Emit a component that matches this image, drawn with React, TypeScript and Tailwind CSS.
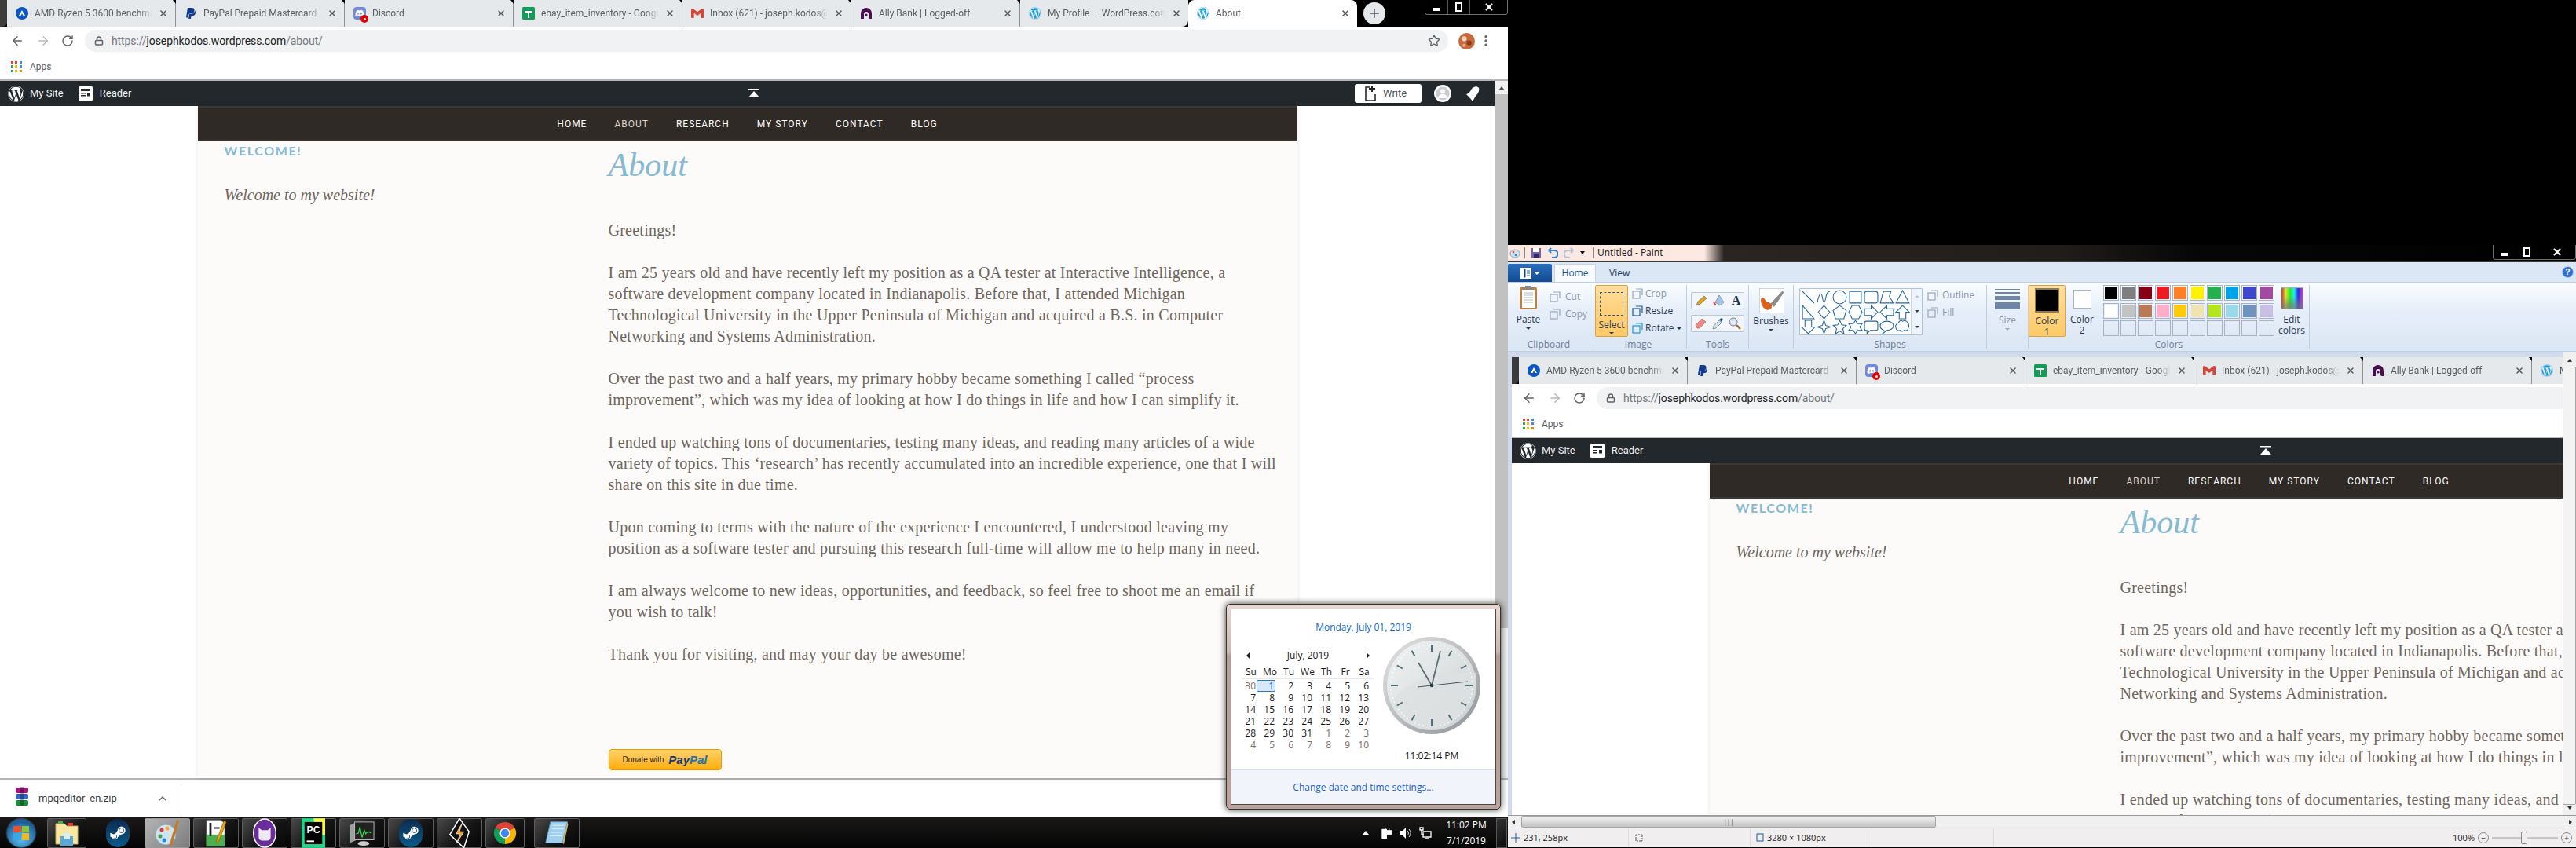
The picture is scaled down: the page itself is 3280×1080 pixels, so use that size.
import React from "react";
import { ArrowLeft, ArrowRight, ChevronUp, Lock, MoreVertical, Plus, RotateCw, Star, X } from "lucide-react";
import { FaDiscord, FaPaypal, FaSteamSymbol, FaWordpress } from "react-icons/fa";
import { SiGmail } from "react-icons/si";

const WpIcon = () => <FaWordpress className="h-4 w-4 shrink-0 text-[#1f9fd8]" />;

const tabs = [
  {
    title: "AMD Ryzen 5 3600 benchmark results",
    icon: (
      <svg viewBox="0 0 16 16" className="h-4 w-4 shrink-0">
        <circle cx="8" cy="8" r="8" fill="#0b55c4" />
        <path d="M8 4l4 7H4z" fill="#fff" />
        <path d="M8 8l1.5 3h-3z" fill="#0b55c4" />
      </svg>
    ),
  },
  { title: "PayPal Prepaid Mastercard", icon: <FaPaypal className="h-4 w-4 shrink-0 text-[#123a8c]" /> },
  {
    title: "Discord",
    icon: (
      <span className="relative flex h-4 w-4 shrink-0 items-center justify-center rounded-sm bg-[#7289da]">
        <FaDiscord className="h-3 w-3 text-white" />
        <span className="absolute -bottom-1 right-[-3px] flex h-[10px] w-[10px] items-center justify-center rounded-full bg-[#e00000]">
          <span className="h-[3px] w-[3px] rounded-full bg-white" />
        </span>
      </span>
    ),
  },
  {
    title: "ebay_item_inventory - Google Sheets",
    icon: (
      <svg viewBox="0 0 16 16" className="h-4 w-4 shrink-0">
        <rect width="16" height="16" rx="1.5" fill="#0f9d58" />
        <path d="M3 5h10v2H9v7H7V7H3z" fill="#fff" />
      </svg>
    ),
  },
  { title: "Inbox (621) - joseph.kodos@gmail.com", icon: <SiGmail className="h-4 w-4 shrink-0 text-[#d44638]" /> },
  {
    title: "Ally Bank | Logged-off",
    icon: (
      <svg viewBox="0 0 16 16" className="h-4 w-4 shrink-0">
        <path d="M8 1a7 7 0 0 0-7 7v7h4V9a3 3 0 0 1 6 0v4a2 2 0 0 0 2 2h2V8a7 7 0 0 0-7-7z" fill="#4a0d4f" />
        <circle cx="8" cy="10" r="1.6" fill="#4a0d4f" />
      </svg>
    ),
  },
  { title: "My Profile — WordPress.com", icon: <WpIcon /> },
  { title: "About", icon: <WpIcon />, active: true },
];

const navItems = ["Home", "About", "Research", "My Story", "Contact", "Blog"];

const paragraphs = [
  ["Greetings!"],
  [
    "I am 25 years old and have recently left my position as a QA tester at Interactive Intelligence, a",
    "software development company located in Indianapolis. Before that, I attended Michigan",
    "Technological University in the Upper Peninsula of Michigan and acquired a B.S. in Computer",
    "Networking and Systems Administration.",
  ],
  [
    "Over the past two and a half years, my primary hobby became something I called “process",
    "improvement”, which was my idea of looking at how I do things in life and how I can simplify it.",
  ],
  [
    "I ended up watching tons of documentaries, testing many ideas, and reading many articles of a wide",
    "variety of topics. This ‘research’ has recently accumulated into an incredible experience, one that I will",
    "share on this site in due time.",
  ],
  [
    "Upon coming to terms with the nature of the experience I encountered, I understood leaving my",
    "position as a software tester and pursuing this research full-time will allow me to help many in need.",
  ],
  [
    "I am always welcome to new ideas, opportunities, and feedback, so feel free to shoot me an email if",
    "you wish to talk!",
  ],
  ["Thank you for visiting, and may your day be awesome!"],
];

const AppsGrid = () => {
  const colors = ["#ea4335", "#ea4335", "#4285f4", "#34a853", "#fbbc05", "#4285f4", "#34a853", "#fbbc05", "#ea8600"];
  return (
    <div className="grid h-[14px] w-[14px] grid-cols-3 gap-[2px]">
      {colors.map((c, i) => (
        <svg key={i} viewBox="0 0 3 3" className="h-[3px] w-[3px]">
          <rect width="3" height="3" fill={c} />
        </svg>
      ))}
    </div>
  );
};

const WindowControls = () => (
  <div className="flex h-[19px] w-[106px] items-center rounded-b-[4px] border border-t-0 border-[#6f6f6f] text-white">
    <div className="flex h-full w-[29px] items-center justify-center border-r border-[#555]">
      <span className="mt-[6px] h-[4px] w-[10px] bg-white" />
    </div>
    <div className="flex h-full w-[28px] items-center justify-center border-r border-[#555]">
      <span className="flex h-[12px] w-[9px] items-center justify-center border-2 border-white">
        <span className="h-[4px] w-[2px] bg-black" />
      </span>
    </div>
    <div className="flex flex-1 items-center justify-center">
      <X className="h-[14px] w-[14px]" strokeWidth={3.5} />
    </div>
  </div>
);

const TabStrip = () => (
  <div className="flex h-[34px] bg-black">
    <div className="h-full w-[9px] rounded-br-[6px] bg-[#3c3c3c]" />
    {tabs.map((t, i) => (
      <div
        key={t.title}
        className={
          t.active
            ? "relative flex h-full w-[215px] items-center gap-[8px] rounded-t-[8px] bg-white pl-[11px] pr-[9px]"
            : i === 6
            ? "relative flex h-full w-[214px] items-center gap-[8px] rounded-br-[8px] bg-[#e6e9ec] pl-[11px] pr-[9px]"
            : "relative flex h-full w-[215px] items-center gap-[8px] border-r border-[#8d9297] bg-[#e6e9ec] pl-[11px] pr-[9px]"
        }
      >
        {t.icon}
        <span className="flex-1 overflow-hidden whitespace-nowrap font-['Roboto',sans-serif] text-[12px] text-[#5c6065] [mask-image:linear-gradient(to_right,black_88%,transparent)]">
          {t.title}
        </span>
        <X className="h-[12px] w-[12px] shrink-0 text-[#55595e]" strokeWidth={3} />
        {i < 6 && (
          <span className="absolute -right-[5px] top-0 h-0 w-0 border-x-[4px] border-t-[5px] border-x-transparent border-t-black" />
        )}
      </div>
    ))}
    <div className="ml-[8px] mt-[3px] flex h-[28px] w-[28px] items-center justify-center rounded-full bg-[#e6e9ec]">
      <Plus className="h-[18px] w-[18px] text-[#55595e]" strokeWidth={2} />
    </div>
    <div className="ml-auto">
      <WindowControls />
    </div>
  </div>
);

const Toolbar = () => (
  <div className="flex h-[35px] items-start bg-white pt-[4px]">
    <div className="flex h-[28px] w-[108px] items-center pl-[13px] text-[#5f6368]">
      <ArrowLeft className="h-[18px] w-[18px]" strokeWidth={2} />
      <ArrowRight className="ml-[15px] h-[18px] w-[18px] text-[#b5b8bb]" strokeWidth={2} />
      <RotateCw className="ml-[14px] h-[16px] w-[16px]" strokeWidth={2.2} />
    </div>
    <div className="flex h-[28px] w-[1736px] items-center rounded-full bg-[#f0f2f4] pl-[12px] pr-[10px]">
      <Lock className="h-[12px] w-[12px] text-[#5f6368]" strokeWidth={3} />
      <span className="ml-[10px] font-['Roboto',sans-serif] text-[14px] tracking-[-0.1px] text-[#74787c]">
        https://<span className="text-[#222]">josephkodos.wordpress.com</span>/about/
      </span>
      <Star className="ml-auto h-[16px] w-[16px] text-[#5f6368]" strokeWidth={2} />
    </div>
    <svg viewBox="0 0 20 20" className="ml-[13px] mt-[4px] h-[21px] w-[21px]">
      <circle cx="10" cy="10" r="10" fill="#c8693a" />
      <circle cx="7" cy="7" r="3" fill="#f3d9c4" />
      <circle cx="13" cy="12" r="3" fill="#8c3a1c" />
      <circle cx="7" cy="15" r="2" fill="#eab28f" />
    </svg>
    <MoreVertical className="ml-[5px] mt-[5px] h-[18px] w-[18px] text-[#5f6368]" strokeWidth={2.5} />
  </div>
);

const BookmarksBar = () => (
  <div className="flex h-[34px] items-center gap-[10px] border-b-2 border-[#b5b5b5] bg-white pl-[14px]">
    <AppsGrid />
    <span className="font-['Roboto',sans-serif] text-[12px] text-[#5c6065]">Apps</span>
  </div>
);

const WpBar = () => (
  <div className="flex h-[32px] items-center bg-[#23282d] pl-[10px] pr-[18px] font-['Roboto',sans-serif] text-[13px] text-[#eef0f2]">
    <FaWordpress className="h-[21px] w-[21px] text-white" />
    <span className="ml-[7px]">My Site</span>
    <svg viewBox="0 0 18 18" className="ml-[19px] h-[18px] w-[18px]">
      <rect width="18" height="18" rx="1.5" fill="#fff" />
      <path d="M3 3h12v3H3zM3 8h6v1.5H3zM3 11h6v1.5H3zM11 8h4v4.5h-4z" fill="#23282d" />
    </svg>
    <span className="ml-[9px]">Reader</span>
    <svg viewBox="0 0 16 12" className="ml-[785px] h-[12px] w-[16px]">
      <path d="M1 0h14v1.5H1zM8 3l7 8H1z" fill="#fff" />
    </svg>
    <div className="ml-auto flex h-[24px] w-[85px] items-center gap-[7px] rounded-[3px] bg-white pl-[13px] text-[#50575e]">
      <svg viewBox="0 0 16 20" className="h-[20px] w-[16px]">
        <path d="M6 2H1v17h12v-8" fill="none" stroke="#23282d" strokeWidth="1.6" />
        <path d="M9 0v8M5 4h8" stroke="#23282d" strokeWidth="2" />
      </svg>
      <span>Write</span>
    </div>
    <svg viewBox="0 0 22 22" className="ml-[16px] h-[24px] w-[22px]">
      <circle cx="11" cy="11" r="11" fill="#fff" />
      <circle cx="11" cy="11" r="8.5" fill="#c9ccd0" />
      <circle cx="11" cy="8.5" r="3" fill="#fff" />
      <path d="M5 17a6 5 0 0 1 12 0z" fill="#fff" />
    </svg>
    <svg viewBox="0 0 20 22" className="ml-[17px] h-[22px] w-[20px]">
      <path d="M2 12c4-1 5-4 7-7 2-3 7-4 9-1 1 4-1 7-3 9-2 2-3 5-5 8-2-3-5-6-8-9z" fill="#fff" />
    </svg>
  </div>
);

const WebPage = () => (
  <div className="relative mx-auto flex h-full min-h-0 w-[1400px] flex-col bg-[#fcfbf9] shadow-[0_0_6px_rgba(0,0,0,0.1)]">
    <nav className="flex h-[45px] items-center justify-center gap-[35px] border-y-2 border-[#3d3833] bg-[#2f2a26] font-['Roboto',sans-serif] text-[12px] font-normal uppercase tracking-[1px] text-white">
      {navItems.map((n) => (
        <span key={n} className={n === "About" ? "text-[#dcd4c6]" : ""}>
          {n}
        </span>
      ))}
    </nav>
    <div className="flex">
      <aside className="w-[523px] shrink-0 pl-[34px]">
        <h3 className="mt-[2px] font-['Lato',sans-serif] text-[16px] font-bold uppercase leading-[20px] tracking-[1.6px] text-[#86bad4]">
          Welcome!
        </h3>
        <p className="mt-[33px] font-['Liberation_Serif',serif] text-[20px] italic leading-[27px] text-[#6f665e]">
          Welcome to my website!
        </p>
      </aside>
      <main className="font-['Liberation_Serif',serif] text-[20px] leading-[27px] text-[#6f665e]">
        <h1 className="mt-[6px] text-[42px] italic leading-[48px] text-[#86bad4]">About</h1>
        <div className="mt-[46px] flex flex-col gap-[27px]">
          {paragraphs.map((lines) => (
            <p key={lines[0]} className="whitespace-nowrap tracking-[0.25px]">
              {lines.map((line) => (
                <span key={line} className="block">
                  {line}
                </span>
              ))}
            </p>
          ))}
        </div>
        <div className="mt-[107px] flex h-[27px] w-[144px] items-center justify-center gap-[6px] rounded-[4px] border border-[#e89a00] bg-[linear-gradient(#ffd36a,#ffac0d)] font-['Liberation_Sans',sans-serif]">
          <span className="text-[10px] text-[#222]">Donate with</span>
          <span className="text-[15px] font-bold italic leading-none text-[#123a7c]">
            Pay<span className="text-[#1a73c4]">Pal</span>
          </span>
        </div>
      </main>
    </div>
  </div>
);

const Browser = () => (
  <div className="flex h-[1040px] w-[1920px] flex-col">
    <TabStrip />
    <Toolbar />
    <BookmarksBar />
    <div className="flex h-[888px] bg-white">
      <div className="flex w-[1903px] flex-col">
        <WpBar />
        <div className="min-h-0 flex-1">
          <WebPage />
        </div>
      </div>
      <div className="flex w-[17px] flex-col items-center bg-[#f1f1f1]">
        <span className="mt-[7px] h-0 w-0 border-x-[4px] border-b-[5px] border-x-transparent border-b-[#505050]" />
        <div className="mt-[5px] h-[680px] w-full bg-[#c1c1c1]" />
      </div>
    </div>
    <div className="flex h-[49px] items-center border-t-2 border-[#b5b5b5] bg-white">
      <svg viewBox="0 0 16 24" className="ml-[20px] mb-[6px] h-[24px] w-[16px]">
        <rect x="0" y="1" width="16" height="7" rx="2" fill="#a3127f" />
        <rect x="0" y="9" width="16" height="7" rx="2" fill="#3a63c8" />
        <rect x="0" y="17" width="16" height="7" rx="2" fill="#1b8a3a" />
        <path d="M6 0h4v24H6z" fill="#111" opacity=".35" />
      </svg>
      <span className="ml-[13px] font-['Roboto',sans-serif] text-[13px] text-[#3c4043]">mpqeditor_en.zip</span>
      <ChevronUp className="ml-[50px] h-[16px] w-[16px] text-[#5f6368]" strokeWidth={2} />
      <div className="ml-[15px] h-[36px] w-px bg-[#d8d8d8]" />
    </div>
  </div>
);

type TaskItem = { icon: React.ReactNode; w: number; state: "off" | "on" | "active"; gap: number };

const Folder = () => (
  <svg viewBox="0 0 32 36" className="h-[36px] w-[32px]">
    <path d="M2 6h11l3 3h14v23H2z" fill="#f7e7a0" stroke="#c9b060" />
    <path d="M8 22h16v12H8z" fill="#5aa9dc" />
    <path d="M12 18h8v8h-8z" fill="#d9eefb" />
    <rect x="5" y="3" width="6" height="3" fill="#4caf50" />
    <rect x="18" y="5" width="6" height="4" fill="#e53935" />
  </svg>
);

const Palette = () => (
  <svg viewBox="0 0 32 36" className="h-[36px] w-[32px]">
    <ellipse cx="14" cy="20" rx="13" ry="13" fill="#cfe3f0" stroke="#8fa9bb" />
    <circle cx="9" cy="14" r="2.5" fill="#e53935" />
    <circle cx="16" cy="12" r="2.5" fill="#f9a825" />
    <circle cx="7" cy="22" r="2.5" fill="#43a047" />
    <circle cx="12" cy="27" r="2.5" fill="#1e88e5" />
    <path d="M28 1l3 2-9 31-4 1z" fill="#c47a2c" />
  </svg>
);

const NotepadPP = () => (
  <svg viewBox="0 0 32 40" className="h-[38px] w-[30px]">
    <path d="M3 2h20l5 5v31H3z" fill="#fff" stroke="#555" />
    <path d="M3 22h25v16H3z" fill="#4caf50" />
    <path d="M7 6h3v18H7zM13 12h8v2h-8z" fill="#222" />
    <path d="M27 3l3 2-10 26-3 3 0-5z" fill="#e8a317" stroke="#7a4c00" strokeWidth=".6" />
  </svg>
);

const Kraken = () => (
  <svg viewBox="0 0 32 40" className="h-[38px] w-[32px]">
    <ellipse cx="16" cy="20" rx="15" ry="19" fill="#6b2c9c" stroke="#fff" strokeWidth="1.6" />
    <path d="M8 13l4 3h8l4-3v13a5 5 0 0 1-5 4h-6a5 5 0 0 1-5-4z" fill="#efe9f5" />
  </svg>
);

const PyCharm = () => (
  <svg viewBox="0 0 32 40" className="h-[38px] w-[30px]">
    <rect width="32" height="40" fill="#21d789" />
    <path d="M16 0h16v22H22z" fill="#fcf84a" />
    <rect x="4" y="5" width="24" height="30" fill="#000" />
    <path d="M7 30h10v2H7z" fill="#fff" />
    <text x="7" y="20" fill="#fff" fontSize="13" fontFamily="Liberation Sans" fontWeight="700">
      PC
    </text>
  </svg>
);

const Monitor = () => (
  <svg viewBox="0 0 34 38" className="h-[36px] w-[32px]">
    <path d="M1 8l7-3v24l-7 3z" fill="#9aa3a0" />
    <rect x="7" y="4" width="26" height="24" fill="#222" stroke="#bbb" />
    <path d="M9 20l3-1 2-8 3 14 3-10 2 5 3-3 5 2" fill="none" stroke="#35d04a" strokeWidth="1.4" />
    <ellipse cx="19" cy="33" rx="8" ry="3" fill="#c8cdd0" />
  </svg>
);

const Winamp = () => (
  <svg viewBox="0 0 32 40" className="h-[38px] w-[30px]">
    <path d="M16 0l13 18-7 22L3 22z" fill="#111" stroke="#fff" strokeWidth="1.6" />
    <path d="M20 6l-9 15h6l-5 13 10-16h-6z" fill="#f39a1f" stroke="#fff" strokeWidth=".7" />
  </svg>
);

const Notepad = () => (
  <svg viewBox="0 0 34 38" className="h-[34px] w-[32px]">
    <path d="M8 3h24l-7 30H1z" fill="#9fd0ee" stroke="#5e93b4" />
    <path d="M11 8h17M10 13h17M8 18h17M7 23h17" stroke="#e6f4fc" />
    <path d="M25 33l7-30 1 4-6 28z" fill="#d2b36a" />
  </svg>
);

const Steam = () => (
  <span className="flex h-[36px] w-[30px] items-center justify-center rounded-full bg-[linear-gradient(#0c2a4e,#0b5c8c)]">
    <FaSteamSymbol className="h-[22px] w-[22px] text-white" />
  </span>
);

const Chrome = () => (
  <svg viewBox="0 0 32 32" className="h-[32px] w-[30px]">
    <path d="M16 16L3 8.500A15 15 0 0 1 29 8.500z" fill="#db4437" />
    <path d="M16 16L29 8.500A15 15 0 0 1 16 31z" fill="#f4b400" />
    <path d="M16 16L16 31A15 15 0 0 1 3 8.500z" fill="#0f9d58" />
    <circle cx="16" cy="16" r="7" fill="#fff" />
    <circle cx="16" cy="16" r="5.500" fill="#4285f4" />
  </svg>
);

const taskItems: TaskItem[] = [
  { icon: <Folder />, w: 50, state: "on", gap: 0 },
  { icon: <Steam />, w: 50, state: "off", gap: 15 },
  { icon: <Palette />, w: 58, state: "active", gap: 9 },
  { icon: <NotepadPP />, w: 58, state: "on", gap: 4 },
  { icon: <Kraken />, w: 58, state: "on", gap: 4 },
  { icon: <PyCharm />, w: 58, state: "on", gap: 4 },
  { icon: <Monitor />, w: 58, state: "on", gap: 4 },
  { icon: <Steam />, w: 58, state: "on", gap: 4 },
  { icon: <Winamp />, w: 58, state: "on", gap: 4 },
  { icon: <Chrome />, w: 50, state: "on", gap: 4 },
  { icon: <Notepad />, w: 58, state: "on", gap: 12 },
];

const Taskbar = () => (
  <div className="flex h-[40px] w-[1920px] items-center border-t border-[#3c3c3c] bg-[linear-gradient(#1b1918,#040404)] font-['Open_Sans',sans-serif] text-white">
    <div className="ml-[9px] flex h-[36px] w-[36px] items-center justify-center rounded-full bg-[radial-gradient(circle_at_50%_70%,#5fc4f0,#1c5d9c_70%)] shadow-[0_0_2px_#9fd3f5]">
      <div className="grid h-[18px] w-[20px] grid-cols-2 gap-px">
        <span className="bg-[#e8512f]" />
        <span className="bg-[#8bc53f]" />
        <span className="bg-[#3ba7e0]" />
        <span className="bg-[#f5b91b]" />
      </div>
    </div>
    <div className="ml-[15px] flex h-full items-center">
      {taskItems.map((t, i) => (
        <div
          key={i}
          style={{ width: t.w, marginLeft: t.gap }}
          className={
            t.state === "active"
              ? "flex h-[38px] items-center justify-center rounded-[2px] border border-[#9a9a9a] bg-[linear-gradient(135deg,#b4b4b4,#7c7c7c)]"
              : t.state === "on"
              ? "flex h-[38px] items-center justify-center rounded-[2px] border border-[#5c5c5c] bg-[linear-gradient(135deg,#4a4a4a,#161616_55%,#050505)]"
              : "flex h-[38px] items-center justify-center"
          }
        >
          {t.icon}
        </div>
      ))}
    </div>
    <div className="ml-auto flex items-center">
      <span className="h-0 w-0 border-x-[4px] border-b-[5px] border-x-transparent border-b-white" />
      <svg viewBox="0 0 14 18" className="ml-[15px] h-[17px] w-[14px]">
        <path d="M1 4h7v13H1z" fill="#fff" />
        <path d="M6 2v4M11 2v4M4 6h10v5H4z" stroke="#fff" fill="#fff" />
      </svg>
      <svg viewBox="0 0 16 16" className="ml-[10px] h-[16px] w-[16px]">
        <path d="M1 5h3l4-4v14l-4-4H1z" fill="#fff" />
        <path d="M10 5a4 4 0 0 1 0 6M12 3a7 7 0 0 1 0 10" fill="none" stroke="#ddd" />
      </svg>
      <svg viewBox="0 0 16 16" className="ml-[9px] h-[16px] w-[16px]">
        <path d="M5 6h10v7H5zM8 15h4M1 1h4v3H1zM3 4v6h3" fill="none" stroke="#fff" strokeWidth="1.3" />
      </svg>
      <div className="ml-[16px] w-[56px] text-center text-[12px] leading-[20px]">
        <div>11:02 PM</div>
        <div>7/1/2019</div>
      </div>
      <div className="ml-[10px] h-[38px] w-[14px] border border-[#555] bg-[linear-gradient(135deg,#333,#0a0a0a)]" />
      <span className="w-px" />
    </div>
  </div>
);

const ribbonLabel = "text-center font-['Open_Sans',sans-serif] text-[12px] leading-[14px] text-[#2b3d55]";
const groupTitle = "absolute bottom-[-2px] left-0 right-0 text-center text-[12px] leading-[14px] text-[#6f8098]";

const RibbonGroup = ({ title, width, children }: { title: string; width: number; children: React.ReactNode }) => (
  <div style={{ width }} className="relative h-full shrink-0 border-r border-[#c0cfe0]">
    {children}
    <div className={groupTitle}>{title}</div>
  </div>
);

const MiniIcon = ({ color }: { color: string }) => (
  <svg viewBox="0 0 14 14" className="h-[14px] w-[14px] shrink-0">
    <rect x="1" y="4" width="9" height="9" fill="none" stroke={color} strokeWidth="1.2" />
    <path d="M5 1h8v8" fill="none" stroke={color} strokeWidth="1.2" />
  </svg>
);

const shapePaths = [
  "M1 1L16 16",
  "M1 15C3 4 6 2 7 9s3 7 4 1 3-8 5-8",
  "M1 9a8 8 0 1 0 16 0a8 8 0 1 0-16 0z",
  "M2 2h14v14H2z",
  "M4 2h10q3 0 3 3v8q0 3-3 3H4q-3 0-3-3V5q0-3 3-3z",
  "M5 2h9l-2 6 5 8H1z",
  "M9 1l8 15H1z",
  "M2 1l14 16H2z",
  "M9 1l7 8-7 8-7-8z",
  "M9 1l8 6-3 10H4L1 7z",
  "M5 1h8l4 8-4 8H5L1 9z",
  "M1 5h8V1l8 8-8 8v-4H1z",
  "M17 5H9V1L1 9l8 8v-4h8z",
  "M5 17V9H1l8-8 8 8h-4v8z",
  "M5 1v8H1l8 8 8-8h-4V1z",
  "M9 1l2 6 6 2-6 2-2 6-2-6-6-2 6-2z",
  "M9 1l2.400 5.500 5.600.5-4.200 4 1.200 6L9 14l-5 3 1.200-6L1 7l5.600-.5z",
  "M9 1l2.500 4H17l-2.800 4 2.800 4h-5.500L9 17l-2.500-4H1l2.800-4L1 5h5.500z",
  "M3 2h12q2 0 2 2v7q0 2-2 2H8l-4 4v-4H3q-2 0-2-2V4q0-2 2-2z",
  "M9 2c5 0 8 2.500 8 5.500S14 13 9 13l-5 4 1-4.500C3 12 1 10 1 7.500 1 4.500 4 2 9 2z",
  "M4 4c1-3 4-3 5-2 2-1 5-1 6 2 2 1 2 4 1 6 0 3-3 4-5 3-2 2-4 1-5 0-3 1-5-1-5-3-1-2 0-5 3-6z",
];

const palette = [
  "#000000", "#7f7f7f", "#880015", "#ed1c24", "#ff7f27", "#fff200", "#22b14c", "#00a2e8", "#3f48cc", "#a349a4",
  "#ffffff", "#c3c3c3", "#b97a57", "#ffaec9", "#ffc90e", "#efe4b0", "#b5e61d", "#99d9ea", "#7092be", "#c8bfe7",
];

const PaintRibbon = () => (
  <>
    <div className="flex h-[22px] items-center bg-[linear-gradient(90deg,#fbe8e2_0,#fde9e2_250px,#2a2422_275px,#211d1b_700px,#060606_880px,#000)] border-b-2 border-[#3e3a38]">
      <svg viewBox="0 0 14 14" className="ml-[2px] h-[14px] w-[14px]">
        <ellipse cx="7" cy="8" rx="6" ry="5" fill="#cfe3f0" stroke="#8fa9bb" />
        <circle cx="5" cy="6" r="1.300" fill="#e53935" />
        <circle cx="8" cy="10" r="1.300" fill="#1e88e5" />
      </svg>
      <span className="ml-[5px] h-[14px] w-px bg-[#888]" />
      <svg viewBox="0 0 14 14" className="ml-[7px] h-[14px] w-[14px]">
        <rect x="1" y="1" width="12" height="12" fill="#7a5fb0" />
        <rect x="3" y="1" width="8" height="5" fill="#fff" />
        <rect x="4" y="8" width="6" height="5" fill="#2d2d66" />
      </svg>
      <svg viewBox="0 0 14 14" className="ml-[7px] h-[14px] w-[14px]">
        <path d="M2 4h7a4 4 0 0 1 0 9H6M2 4l3-3M2 4l3 3" fill="none" stroke="#2f7fd0" strokeWidth="2.200" />
      </svg>
      <svg viewBox="0 0 14 14" className="ml-[7px] h-[14px] w-[14px]">
        <path d="M12 4H5a4 4 0 0 0 0 9h3M12 4L9 1M12 4L9 7" fill="none" stroke="#a9c3dc" strokeWidth="2.200" />
      </svg>
      <span className="ml-[7px] h-0 w-0 border-x-[3px] border-t-[4px] border-x-transparent border-t-black" />
      <span className="ml-[10px] h-[14px] w-px bg-[#888]" />
      <span className="ml-[5px] font-['Open_Sans',sans-serif] text-[12px] text-[#222]">Untitled - Paint</span>
      <div className="ml-auto self-start">
        <WindowControls />
      </div>
    </div>
    <div className="flex h-[25px] items-end bg-[#dce7f5] font-['Open_Sans',sans-serif] text-[12px]">
      <div className="flex h-[23px] w-[56px] items-center justify-center gap-[3px] rounded-t-[2px] bg-[linear-gradient(#2a6ebd,#114a90)]">
        <svg viewBox="0 0 14 14" className="h-[14px] w-[14px]">
          <rect width="14" height="14" fill="#fff" />
          <path d="M5 2h1v10H5zM8 4h4M8 7h4M8 10h4" stroke="#1c5a9c" />
        </svg>
        <span className="h-0 w-0 border-x-[4px] border-t-[4px] border-x-transparent border-t-white" />
      </div>
      <div className="ml-[3px] flex h-[23px] w-[53px] items-center justify-center rounded-t-[2px] border-x border-t border-[#c5d3e5] bg-[#f7fbff] text-[#1e5a9c]">
        Home
      </div>
      <div className="ml-[17px] flex h-[23px] items-center text-[#1f3d63]">View</div>
      <svg viewBox="0 0 16 16" className="ml-auto mb-[5px] mr-[3px] h-[15px] w-[15px]">
        <circle cx="8" cy="8" r="7.500" fill="#2f6fd1" stroke="#b6cdea" />
        <text x="8" y="12" textAnchor="middle" fontSize="11" fill="#fff" fontWeight="700" fontFamily="Liberation Sans">
          ?
        </text>
      </svg>
    </div>
    <div className="flex h-[89px] border-y border-[#c0cfe0] bg-[linear-gradient(#fafdff,#e6eef9_40%,#dbe6f4)] py-[3px] font-['Open_Sans',sans-serif]">
      <RibbonGroup title="Clipboard" width={105}>
        <div className="flex">
          <div className="ml-[10px] w-[32px]">
            <svg viewBox="0 0 24 32" className="ml-[4px] h-[32px] w-[24px]">
              <rect x="1" y="3" width="22" height="28" rx="2" fill="#b5824c" />
              <rect x="4" y="6" width="16" height="23" fill="#fff" />
              <path d="M6 10h12M6 13h12M6 16h12M6 19h12M6 22h12" stroke="#bbb" />
              <rect x="8" y="1" width="8" height="5" fill="#888" />
            </svg>
            <div className={`${ribbonLabel} mt-[5px]`}>Paste</div>
            <span className="mx-auto mt-[3px] block h-0 w-0 border-x-[3px] border-t-[3px] border-x-transparent border-t-[#2b3d55]" />
          </div>
          <div className="ml-[11px] mt-[8px] flex flex-col gap-[8px] text-[12px] leading-[14px] text-[#8d98a8]">
            <div className="flex items-center gap-[6px]">
              <MiniIcon color="#98a6b8" />
              Cut
            </div>
            <div className="flex items-center gap-[6px]">
              <MiniIcon color="#98a6b8" />
              Copy
            </div>
          </div>
        </div>
      </RibbonGroup>
      <RibbonGroup title="Image" width={123}>
        <div className="flex">
          <div className="ml-[6px] h-[66px] w-[42px] rounded-[2px] border border-[#d9a345] bg-[linear-gradient(#ffdf9c,#ffd07a_50%,#ffc966)]">
            <div className="mx-auto mt-[8px] h-[30px] w-[30px] border border-dashed border-[#1c5a9c]" />
            <div className={`${ribbonLabel} mt-[5px]`}>Select</div>
            <span className="mx-auto mt-[2px] block h-0 w-0 border-x-[3px] border-t-[3px] border-x-transparent border-t-[#2b3d55]" />
          </div>
          <div className="ml-[5px] mt-[4px] flex flex-col gap-[8px] text-[12px] leading-[14px] text-[#2b3d55]">
            <div className="flex items-center gap-[3px] text-[#8d98a8]">
              <MiniIcon color="#98a6b8" />
              Crop
            </div>
            <div className="flex items-center gap-[3px]">
              <MiniIcon color="#1c5a9c" />
              Resize
            </div>
            <div className="flex items-center gap-[3px]">
              <MiniIcon color="#1c9ad6" />
              Rotate
              <span className="h-0 w-0 border-x-[3px] border-t-[3px] border-x-transparent border-t-[#2b3d55]" />
            </div>
          </div>
        </div>
      </RibbonGroup>
      <RibbonGroup title="Tools" width={79}>
        <div className="ml-[5px] mt-[9px] flex w-[68px] flex-col gap-[7px]">
          <div className="flex h-[22px] items-center justify-around rounded-[2px] border border-[#b9c9dc] bg-[#f2f6fb]">
            <svg viewBox="0 0 16 16" className="h-[16px] w-[16px]"><path d="M2 14l2-5 8-7 3 3-8 7z" fill="#e8a317" stroke="#555" strokeWidth=".6" /></svg>
            <svg viewBox="0 0 16 16" className="h-[16px] w-[16px]"><path d="M8 1l6 9-5 4-6-4z" fill="#9ec7e8" stroke="#667" strokeWidth=".6" /><path d="M1 9q1 4 3 4" stroke="#e53935" strokeWidth="2" fill="none" /></svg>
            <span className="font-['Liberation_Serif',serif] text-[16px] font-bold leading-none text-[#1f3555]">A</span>
          </div>
          <div className="flex h-[22px] items-center justify-around rounded-[2px] border border-[#b9c9dc] bg-[#f2f6fb]">
            <svg viewBox="0 0 16 16" className="h-[16px] w-[16px]"><path d="M2 10l8-8 5 4-8 8H4z" fill="#ee8a8a" stroke="#955" strokeWidth=".6" /></svg>
            <svg viewBox="0 0 16 16" className="h-[16px] w-[16px]"><path d="M2 15l1-4 7-7 3 3-7 7z" fill="#cfe0ef" stroke="#556" strokeWidth=".6" /><path d="M10 3l3-2 2 2-2 3z" fill="#25507f" /></svg>
            <svg viewBox="0 0 16 16" className="h-[16px] w-[16px]"><circle cx="6" cy="6" r="5" fill="#dbe8f3" stroke="#778" /><path d="M10 10l5 5" stroke="#a0672a" strokeWidth="2.400" /></svg>
          </div>
        </div>
      </RibbonGroup>
      <div className="relative h-full w-[57px] shrink-0 border-r border-[#c0cfe0]">
        <svg viewBox="0 0 32 32" className="ml-[13px] mt-[4px] h-[32px] w-[32px]">
          <rect width="32" height="32" fill="#fff" stroke="#aaa" />
          <path d="M2 14c4-6 5 4 10 4 4 1 6 6 2 9-5 3-12-3-12-13z" fill="#d9631e" />
          <path d="M30 3L14 20l5 4L31 6z" fill="#8a8a8a" />
        </svg>
        <div className={`${ribbonLabel} mt-[3px]`}>Brushes</div>
        <span className="mx-auto mt-[3px] block h-0 w-0 border-x-[3px] border-t-[3px] border-x-transparent border-t-[#2b3d55]" />
      </div>
      <RibbonGroup title="Shapes" width={246}>
        <div className="flex">
          <div className="ml-[7px] mt-[4px] flex h-[60px] w-[157px] rounded-[1px] border border-[#b0c2d8] bg-white">
            <div className="grid flex-1 grid-cols-7 pl-[1px] pt-[1px]">
              {shapePaths.map((d) => (
                <svg key={d} viewBox="0 0 18 18" className="h-[19px] w-[19px]">
                  <path d={d} fill="none" stroke="#1f66a8" strokeWidth="1" />
                </svg>
              ))}
            </div>
            <div className="flex w-[14px] flex-col items-center justify-around border-l border-[#cdd9e8] bg-[#edf3fa]">
              <span className="h-0 w-0 border-x-[3px] border-b-[3px] border-x-transparent border-b-[#b9c6d6]" />
              <span className="h-0 w-0 border-x-[3px] border-t-[3px] border-x-transparent border-t-[#2b3d55]" />
              <span className="h-0 w-0 border-x-[3px] border-t-[3px] border-x-transparent border-t-[#2b3d55]" />
            </div>
          </div>
          <div className="ml-[6px] mt-[6px] flex flex-col gap-[8px] text-[12px] leading-[14px] text-[#8d98a8]">
            <div className="flex items-center gap-[5px]">
              <MiniIcon color="#98a6b8" />
              Outline
            </div>
            <div className="flex items-center gap-[5px]">
              <MiniIcon color="#98a6b8" />
              Fill
            </div>
          </div>
        </div>
      </RibbonGroup>
      <div className="relative h-full w-[53px] shrink-0 border-r border-[#c0cfe0]">
        <div className="ml-[10px] mt-[5px] flex w-[32px] flex-col gap-[3px]">
          <span className="h-px bg-[#6f85a6]" />
          <span className="h-[2px] bg-[#6f85a6]" />
          <span className="h-[5px] bg-[#6f85a6]" />
          <span className="h-[9px] bg-[#6f85a6]" />
        </div>
        <div className={`${ribbonLabel} mt-[7px] text-[#8d98a8]`}>Size</div>
        <span className="mx-auto mt-[3px] block h-0 w-0 border-x-[3px] border-t-[3px] border-x-transparent border-t-[#9aa8ba]" />
      </div>
      <RibbonGroup title="Colors" width={358}>
        <div className="flex">
          <div className="h-[66px] w-[47px] rounded-[2px] border border-[#d9a345] bg-[linear-gradient(#ffdf9c,#ffc966)] pt-[3px]">
            <div className="mx-auto h-[31px] w-[31px] border-2 border-[#8a7a5a] bg-black" />
            <div className={`${ribbonLabel} mt-[4px]`}>
              Color
              <br />1
            </div>
          </div>
          <div className="ml-[4px] w-[34px] pt-[6px]">
            <div className="mx-auto h-[24px] w-[23px] border border-[#a8b4c4] bg-white" />
            <div className={`${ribbonLabel} mt-[7px]`}>
              Color
              <br />2
            </div>
          </div>
          <div className="ml-[10px] grid grid-cols-10 gap-[2px]">
            {palette.map((c) => (
              <div key={c} className="h-[20px] w-[20px] border border-[#a8b4c4] p-px">
                <div style={{ background: c }} className="h-full w-full" />
              </div>
            ))}
            {palette.slice(0, 10).map((c) => (
              <div key={c} className="h-[20px] w-[20px] border border-[#a8b4c4]" />
            ))}
          </div>
          <div className="ml-[3px] w-[38px] pt-[3px]">
            <div className="mx-auto h-[28px] w-[29px] border border-[#a8b4c4] bg-[linear-gradient(90deg,#e22,#ee2,#2e2,#2ee,#22e,#e2e)] shadow-[inset_0_-10px_10px_rgba(120,120,120,0.7)]" />
            <div className={`${ribbonLabel} mt-[6px]`}>
              Edit
              <br />colors
            </div>
          </div>
        </div>
      </RibbonGroup>
    </div>
  </>
);

const PaintWindow = () => (
  <div className="flex w-[1360px] flex-col bg-black">
    <div className="h-[312px]" />
    <PaintRibbon />
    <div className="flex h-[590px] bg-[#cfdbec]">
      <div className="ml-[5px] mt-[7px] h-[583px] w-[1338px] overflow-hidden">
        <Browser />
      </div>
      <div className="flex w-[17px] flex-col items-center bg-[#f0f0f0]">
        <span className="mt-[9px] h-0 w-0 border-x-[3px] border-b-[4px] border-x-transparent border-b-[#333]" />
        <div className="mt-[6px] h-[558px] w-full rounded-[2px] border border-[#a5a5a5] bg-[#f3f3f3]" />
        <span className="mt-[2px] h-0 w-0 border-x-[3px] border-t-[4px] border-x-transparent border-t-[#333]" />
      </div>
    </div>
    <div className="flex h-[16px] items-center border-t border-[#9a9a9a] bg-[#f0f0f0]">
      <span className="ml-[5px] h-0 w-0 border-y-[3px] border-r-[4px] border-y-transparent border-r-[#333]" />
      <div className="ml-[8px] flex h-[15px] w-[528px] items-center justify-center rounded-[2px] border border-[#a5a5a5] bg-[linear-gradient(#f2f2f2,#c4c4c4)] text-[8px] leading-none text-[#666]">
        |||
      </div>
      <span className="ml-auto mr-[5px] h-0 w-0 border-y-[3px] border-l-[4px] border-y-transparent border-l-[#333]" />
    </div>
    <div className="flex h-[25px] items-center border-t border-[#b5b5b5] bg-[#f0eeee] font-['Open_Sans',sans-serif] text-[11px] text-[#222]">
      <div className="flex h-full w-[154px] items-center gap-[4px] border-r border-[#dcdcdc] pl-[4px]">
        <svg viewBox="0 0 12 12" className="h-[12px] w-[12px]"><path d="M6 0v12M0 6h12" stroke="#1c5a9c" /></svg>
        231, 258px
      </div>
      <div className="flex h-full w-[155px] items-center border-r border-[#dcdcdc] pl-[7px]">
        <svg viewBox="0 0 12 12" className="h-[12px] w-[12px]"><rect x="2" y="2" width="8" height="8" fill="none" stroke="#555" strokeDasharray="2 1" /></svg>
      </div>
      <div className="flex h-full w-[155px] items-center gap-[3px] border-r border-[#dcdcdc] pl-[6px]">
        <svg viewBox="0 0 12 12" className="h-[12px] w-[12px]"><rect x="2" y="1" width="8" height="9" fill="none" stroke="#1c5a9c" /></svg>
        3280 × 1080px
      </div>
      <div className="h-full w-[155px] border-r border-[#dcdcdc]" />
      <div className="ml-auto flex items-center pr-[5px]">
        <span>100%</span>
        <span className="ml-[4px] flex h-[14px] w-[14px] items-center justify-center rounded-full border border-[#8a8a8a] text-[10px] leading-none">−</span>
        <div className="relative mx-[4px] h-[3px] w-[84px] bg-[#c6c6c6]">
          <span className="absolute left-[37px] top-[-7px] h-[16px] w-[8px] rounded-[2px] border border-[#8a8a8a] bg-[#eee]" />
        </div>
        <span className="flex h-[14px] w-[14px] items-center justify-center rounded-full border border-[#8a8a8a] text-[10px] leading-none">+</span>
      </div>
    </div>
    <div className="flex-1" />
  </div>
);

const Clock = () => {
  const ticks = Array.from({ length: 60 }, (_, i) => i * 6);
  return (
    <svg viewBox="-66 -66 132 132" className="h-[132px] w-[132px]">
      <defs>
        <linearGradient id="rim" x1="0" y1="0" x2="1" y2="1">
          <stop offset="0" stopColor="#e5e5e5" />
          <stop offset="1" stopColor="#8f9397" />
        </linearGradient>
        <linearGradient id="face" x1="0" y1="0" x2="1" y2="1">
          <stop offset="0" stopColor="#f2f4f4" />
          <stop offset="1" stopColor="#c9d0d1" />
        </linearGradient>
      </defs>
      <circle r="62" fill="url(#rim)" />
      <circle r="57" fill="url(#face)" />
      <path d="M-52 22C-30 -10 10 -16 56 -16 58 20 30 55 0 56-25 56-45 40-52 22z" fill="#dde1e2" opacity=".8" />
      {ticks.map((a) =>
        a % 30 === 0 ? (
          <line key={a} x1="0" y1="-43" x2="0" y2={a % 90 === 0 ? -52 : -51} stroke="#4f6f78" strokeWidth="2" transform={`rotate(${a})`} />
        ) : (
          <circle key={a} cx="0" cy="-52" r=".8" fill="#fff" transform={`rotate(${a})`} />
        )
      )}
      <line x1="0" y1="0" x2="-17" y2="-29" stroke="#5d6c72" strokeWidth="1.8" />
      <line x1="0" y1="0" x2="11" y2="-44" stroke="#5d6c72" strokeWidth="1.8" />
      <line x1="-18" y1="2" x2="46" y2="-5" stroke="#33484f" strokeWidth=".9" />
      <circle r="2.200" fill="#1f3b44" />
    </svg>
  );
};

const days = [
  ...[30].map((d) => ({ d, muted: true })),
  ...Array.from({ length: 31 }, (_, i) => ({ d: i + 1, muted: false })),
  ...Array.from({ length: 10 }, (_, i) => ({ d: i + 1, muted: true })),
];

const DateTimePopup = () => (
  <div className="absolute left-[1561px] top-[769px] h-[262px] w-[350px] rounded-[5px] border border-[#3a3330] bg-[linear-gradient(#e6d8d3_0,#cbb9b2_60px,#b49e96_66px,#b9a39b)] p-[5px] shadow-[0_0_9px_rgba(0,0,0,0.8)]">
    <div className="flex h-full flex-col border border-[#4d4542] bg-white font-['Open_Sans',sans-serif] text-[12px] text-[#1a1a1a]">
      <div className="mt-[15px] text-center leading-[16px] text-[#0e6bd6]">Monday, July 01, 2019</div>
      <div className="flex flex-1">
        <div className="ml-[8px] mt-[20px] w-[168px]">
          <div className="flex h-[16px] items-center justify-between pl-[11px]">
            <span className="h-0 w-0 border-y-[4px] border-r-[4px] border-y-transparent border-r-[#222]" />
            <span>July, 2019</span>
            <span className="h-0 w-0 border-y-[4px] border-l-[4px] border-y-transparent border-l-[#222]" />
          </div>
          <div className="ml-[5px] mr-[-5px] mt-[6px] grid grid-cols-7 border-b border-[#e8e8e8] pb-[1px] text-center leading-[14px]">
            {["Su", "Mo", "Tu", "We", "Th", "Fr", "Sa"].map((d) => (
              <span key={d}>{d}</span>
            ))}
          </div>
          <div className="grid grid-cols-7 pt-[1px] text-right leading-[15px]">
            {days.map((x, i) => (
              <span
                key={i}
                className={
                  x.d === 1 && !x.muted
                    ? "h-[15px] rounded-[2px] border border-[#2a76d8] bg-[#d7e8fb] pr-[1px] leading-[13px] text-[#1a5fc0]"
                    : x.muted
                    ? "pr-[1px] text-[#7d706a]"
                    : "pr-[1px]"
                }
              >
                {x.d}
              </span>
            ))}
          </div>
        </div>
        <div className="ml-[13px] flex flex-col items-center">
          <Clock />
          <div className="mt-[16px] leading-[16px]">11:02:14 PM</div>
        </div>
      </div>
      <div className="flex h-[44px] items-center justify-center border-t border-[#d5deeb] bg-[#f1f5fb] text-[#1d62c9]">
        Change date and time settings...
      </div>
    </div>
  </div>
);

const App = () => (
  <div className="relative flex h-[1080px] w-[3280px] overflow-hidden bg-black">
    <div className="flex w-[1920px] flex-col">
      <Browser />
      <Taskbar />
    </div>
    <PaintWindow />
    <DateTimePopup />
  </div>
);

export default App;
